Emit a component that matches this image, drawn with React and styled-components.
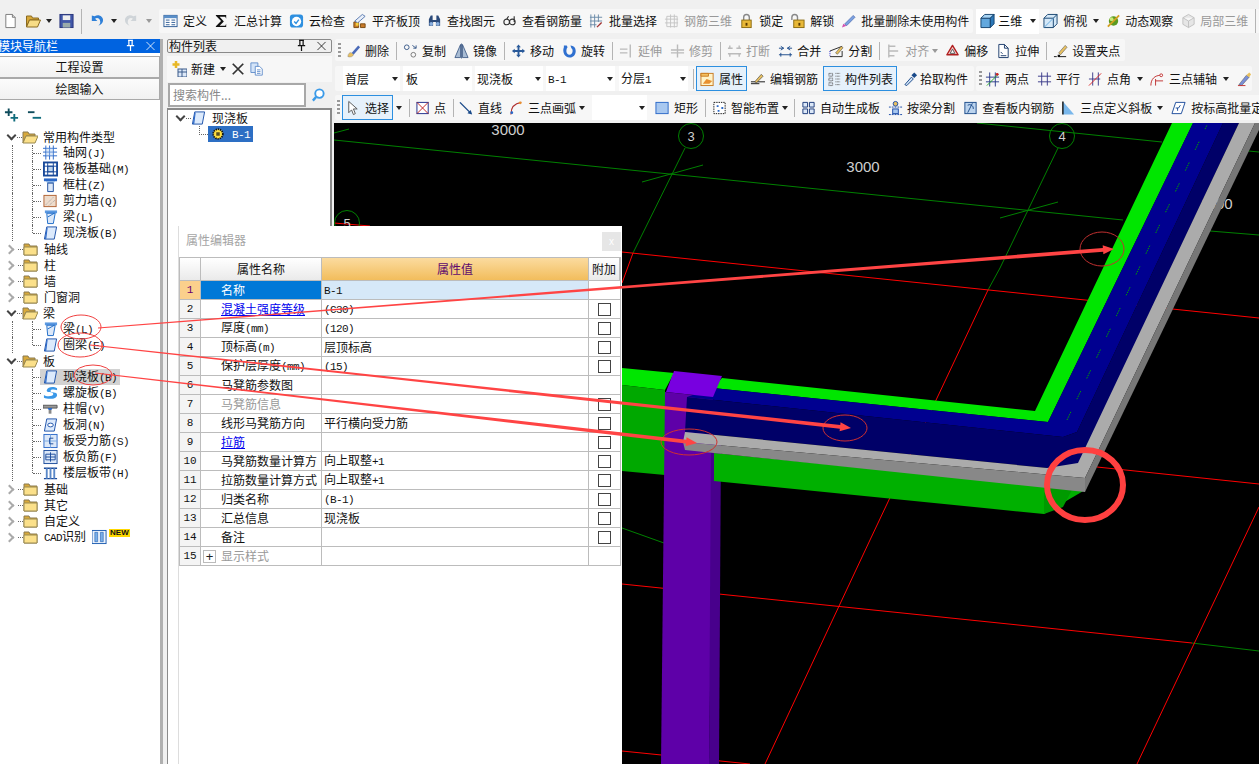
import React from 'react';
import styled, { createGlobalStyle } from 'styled-components';

const GlobalStyle = createGlobalStyle`
  html, body {
    margin: 0;
    padding: 0;
    background: #f0f0f0;
    overflow: hidden;
  }
  * { box-sizing: border-box; }
`;

const Page = styled.div`
  position: relative;
  width: 1259px;
  height: 764px;
  overflow: hidden;
  display: flex;
  flex-direction: column;
  background: #f0f0f0;
  color: #111;
  font: 12px/1 "Noto Sans CJK SC", sans-serif;
  white-space: nowrap;
`;

/* toolbars */
const TopBar = styled.div`
  height: 39px;
  padding: 9px 0 6px 3px;
  display: flex;
  align-items: center;
  gap: 7px;
`;

const Row = styled.div`
  display: flex;
  height: ${p => p.$h}px;
  margin-top: ${p => p.$mt || 0}px;
  margin-left: 1px;
  gap: ${p => p.$between || 0}px;
  flex-shrink: 0;
`;

const Group = styled.div`
  display: flex;
  align-items: center;
  background: #f7f7f7;
  border-radius: 2px;
  gap: ${p => p.$gap ?? 8}px;
  padding: ${p => p.$pt || 0}px ${p => p.$pr || 0}px 0 ${p => p.$pl || 0}px;
  height: 100%;
  margin-left: ${p => p.$ml || 0}px;
  flex: ${p => (p.$grow ? 1 : '0 0 auto')};
`;

const ToolWrap = styled.div`
  display: flex;
  align-items: center;
  flex-shrink: 0;
  gap: ${p => p.$gap ?? 4}px;
  margin-left: ${p => p.$ml || 0}px;
  color: ${p => (p.$muted ? '#999' : '#111')};
`;

const Sep = styled.div`
  width: 1px;
  height: ${p => p.$h || 18}px;
  background: #b4b4b4;
  flex-shrink: 0;
  margin: ${p => p.$m || '0 -2px 0 -1px'};
`;

const Caret = styled.div`
  width: 0;
  height: 0;
  flex-shrink: 0;
  box-sizing: content-box;
  border-left: 3.5px solid transparent;
  border-right: 3.5px solid transparent;
  border-top: 4px solid ${p => (p.$muted ? '#999' : '#222')};
  margin-left: ${p => p.$ml || 0}px;
  margin-right: ${p => p.$mr || 0}px;
`;

const Grip = styled.div`
  width: 3px;
  height: 16px;
  flex-shrink: 0;
  margin-right: ${p => p.$mr || 0}px;
  background: repeating-linear-gradient(to bottom, #999 0 2px, transparent 2px 4px);
`;

const Select = styled.div`
  width: ${p => p.$w}px;
  height: 25px;
  flex-shrink: 0;
  display: flex;
  align-items: center;
  justify-content: space-between;
  padding: 0 2px 0 ${p => p.$pl ?? 2}px;
  background: #fff;
  margin-left: ${p => p.$ml || 0}px;
`;

const DropBox = styled(Select)`
  gap: 3px;
  justify-content: flex-start;
`;

const ToggleButton = styled.div`
  height: 25px;
  flex-shrink: 0;
  display: flex;
  align-items: center;
  gap: ${p => p.$gap ?? 4}px;
  padding: 0 3px 0 ${p => p.$pl ?? 3}px;
  background: #e6f1fb;
  border: 1px solid #2c8fe0;
  margin-left: ${p => p.$ml || 0}px;
`;

const Ico = styled.svg`
  width: ${p => p.$w || 15}px;
  height: 16px;
  flex-shrink: 0;
  display: block;
`;

const Asc = styled.span`
  font-family: "Liberation Mono", monospace;
  font-size: 11px;
  letter-spacing: -0.6px;
`;

const mix = s => s.split(/([\x20-\x7e]+)/).map((part, i) => (i % 2 ? <Asc key={i}>{part}</Asc> : part));

/* main area */
const Main = styled.div`
  flex: 1;
  min-height: 0;
  display: flex;
`;

const NavPanel = styled.div`
  width: 163px;
  flex-shrink: 0;
  display: flex;
  flex-direction: column;
  background: #fff;
  border-right: 3px solid #b0b0b0;
`;

const PanelHead = styled.div`
  height: 14px;
  flex-shrink: 0;
  display: flex;
  align-items: center;
  justify-content: space-between;
  padding: 0 3px 0 ${p => p.$pl || 0}px;
  background: ${p => (p.$active ? '#0063e0' : '#f0f0f0')};
  color: ${p => (p.$active ? '#fff' : '#111')};
  ${p => !p.$active && 'border: 1px solid #8a8a8a; border-radius: 2px;'}
`;

const NavTitle = styled.span`
  margin-left: -2px;
`;

const HeadBtns = styled.div`
  display: flex;
  align-items: center;
  gap: 7px;
`;

const NavTab = styled.div`
  height: 22px;
  display: flex;
  align-items: center;
  justify-content: center;
  background: linear-gradient(#fbfbfb, #f1f1f1);
  border: 1px solid #a9a9a9;
  border-left: 0;
  margin-top: ${p => p.$mt || 0}px;
`;

const NavTools = styled.div`
  height: 29px;
  flex-shrink: 0;
  display: flex;
  align-items: center;
  gap: 8px;
  padding: 1px 0 0 4px;
`;

const TreeWrap = styled.div`
  flex: 1;
  min-height: 0;
`;

const FolderRow = styled.div`
  height: 16px;
  display: flex;
  align-items: center;
  padding-left: 8px;
`;

const Chevron = styled.div`
  width: 7px;
  height: 7px;
  flex-shrink: 0;
  border-right: 2px solid ${p => (p.$open ? '#444' : '#aaa')};
  border-bottom: 2px solid ${p => (p.$open ? '#444' : '#aaa')};
  transform: ${p => (p.$open ? 'translateY(-2px) rotate(45deg)' : 'translateX(-2px) rotate(-45deg)')};
`;

const Dots = styled.div`
  width: ${p => p.$w || 5}px;
  margin-left: ${p => p.$ml ?? 1}px;
  border-top: 1px dotted #666;
  flex-shrink: 0;
`;

const FolderName = styled.span`
  margin-left: ${p => p.$ml ?? 5}px;
`;

const ChildRow = styled.div`
  height: 16px;
  display: flex;
  padding-left: 12px;
`;

const Rail = styled.div`
  width: 1px;
  height: 16px;
  border-left: 1px dotted #666;
  flex-shrink: 0;
`;

const Elbow = styled.div`
  position: relative;
  width: 8px;
  height: ${p => (p.$last ? 8 : 16)}px;
  margin-left: 19px;
  border-left: 1px dotted #666;
  flex-shrink: 0;
  &::after {
    content: '';
    position: absolute;
    left: 0;
    top: 8px;
    width: 8px;
    border-top: 1px dotted #666;
  }
`;

const ChildItem = styled.div`
  display: flex;
  align-items: center;
  gap: 5px;
  padding: 0 3px;
  background: ${p => (p.$selected ? '#d2d2d2' : 'transparent')};
`;

const NewBadge = styled.span`
  font: bold 8px/8px "Liberation Sans", sans-serif;
  color: #111;
  background: #ffd800;
  padding: 0 1px;
  margin: -9px 0 0 2px;
  letter-spacing: 0;
`;

const ListPanel = styled.div`
  width: 165px;
  margin-left: 4px;
  flex-shrink: 0;
  display: flex;
  flex-direction: column;
`;

const ListTools = styled.div`
  height: 26px;
  margin-top: 3px;
  flex-shrink: 0;
  display: flex;
  align-items: center;
  padding-left: 4px;
  gap: 5px;
  background: #f7f7f7;
`;

const SearchRow = styled.div`
  height: 24px;
  margin-top: 1px;
  flex-shrink: 0;
  display: flex;
  align-items: center;
  padding-left: 1px;
  gap: 5px;
`;

const SearchInput = styled.div`
  width: 138px;
  height: 24px;
  display: flex;
  align-items: center;
  padding-left: 3px;
  color: #888;
  background: #fff;
  border: 2px solid #a8a8a8;
`;

const ListTree = styled.div`
  flex: 1;
  min-height: 0;
  margin-top: 1px;
  background: #fff;
  border: 1px solid #8a8a8a;
  border-width: 2px 2px 0 1px;
`;

const ListRow = styled.div`
  height: 16px;
  display: flex;
  align-items: center;
  padding-left: 9px;
`;

const ListChild = styled.div`
  height: 16px;
  display: flex;
  padding-left: 31px;
`;

const ListElbow = styled.div`
  width: 9px;
  height: 9px;
  border-left: 1px dotted #666;
  border-bottom: 1px dotted #666;
  flex-shrink: 0;
`;

const SelectedItem = styled.div`
  width: 45px;
  height: 16px;
  display: flex;
  align-items: center;
  gap: 7px;
  padding-left: 3px;
  color: #fff;
  background: #2d6fc4;
`;

const Work = styled.div`
  flex: 1;
  min-width: 0;
  margin-left: 2px;
  display: flex;
  flex-direction: column;
`;

const Canvas = styled.div`
  flex: 1;
  min-height: 0;
  margin-top: 3px;
  background: #000;
  overflow: hidden;
  svg {
    display: block;
    width: 100%;
    height: 100%;
  }
`;

/* floating property editor */
const EditorWindow = styled.div`
  position: absolute;
  left: 178px;
  top: 226px;
  width: 444px;
  height: 538px;
  background: #fff;
  border-left: 1px solid #ddd;
  display: flex;
  flex-direction: column;
`;

const EditorTitle = styled.div`
  height: 31px;
  flex-shrink: 0;
  display: flex;
  align-items: center;
  justify-content: space-between;
  padding: 0 1px 0 7px;
  color: #a5a5a5;
`;

const TitleText = styled.span`
  margin-top: -3px;
`;

const CloseBox = styled.div`
  width: 19px;
  height: 19px;
  display: flex;
  align-items: center;
  justify-content: center;
  background: #e6e6e6;
  color: #fff;
  font: 10px "Liberation Sans", sans-serif;
`;

const PropGrid = styled.div`
  display: grid;
  grid-template-columns: 21px 121px 267px 31px;
  grid-template-rows: 23px;
  grid-auto-rows: 19px;
  width: 442px;
  border: 1px solid #bcbcbc;
  border-width: 1px 2px 0 1px;
`;

const HeadCell = styled.div`
  display: flex;
  align-items: center;
  justify-content: center;
  background: ${p => (p.$accent ? 'linear-gradient(#fbdb9f, #f2bd5c)' : 'linear-gradient(#fff, #eaeaea)')};
  color: ${p => (p.$accent ? '#5e0a6e' : '#111')};
  border-right: 1px solid #bcbcbc;
  border-bottom: 1px solid #bcbcbc;
`;

const IndexCell = styled.div`
  display: flex;
  align-items: center;
  justify-content: center;
  font: 11px "Liberation Mono", monospace;
  background: ${p => (p.$active ? '#fbd08c' : '#f4f4f4')};
  color: ${p => (p.$active ? '#6a0070' : '#111')};
  border-right: 1px solid #bcbcbc;
  border-bottom: 1px solid #bcbcbc;
`;

const NameCell = styled.div`
  display: flex;
  align-items: center;
  padding-left: ${p => (p.$plus ? 2 : 20)}px;
  gap: 5px;
  overflow: hidden;
  background: ${p => (p.$active ? '#0078d7' : '#fff')};
  color: ${p => (p.$active ? '#fff' : p.$tone === 'link' ? '#0000ee' : p.$tone === 'muted' ? '#999' : '#111')};
  text-decoration: ${p => (p.$tone === 'link' ? 'underline' : 'none')};
  border-right: 1px solid #bcbcbc;
  border-bottom: 1px solid #bcbcbc;
`;

const ValueCell = styled.div`
  display: flex;
  align-items: center;
  padding-left: 2px;
  overflow: hidden;
  background: ${p => (p.$active ? '#d6e8f8' : '#fff')};
  border-right: 1px solid #bcbcbc;
  border-bottom: 1px solid #bcbcbc;
`;

const AddCell = styled.div`
  display: flex;
  align-items: center;
  justify-content: center;
  background: #fff;
  border-bottom: 1px solid #bcbcbc;
`;

const CheckBox = styled.div`
  width: 13px;
  height: 13px;
  border: 1px solid #444;
  background: #fff;
`;

const PlusBox = styled.div`
  width: 13px;
  height: 13px;
  border: 1px solid #bbb;
  display: flex;
  align-items: center;
  justify-content: center;
  color: #222;
  font: 13px/1 "Liberation Sans", sans-serif;
  flex-shrink: 0;
`;

const Overlay = styled.svg`
  position: absolute;
  left: 0;
  top: 0;
  width: 1259px;
  height: 764px;
  pointer-events: none;
`;

/* icons, 16x16 */
const slabIcon = (
  <>
    <path d="M4 1.5h10.5L12 14.5H1.5z" fill="#dceafc" stroke="#1a4fa8" />
    <path d="M2 14.5L4 2l1 .5L3.5 14z" fill="#2a68c8" />
  </>
);
const icons = {
  doc: <><path d="M3 1h7l3 3v11H3z" fill="#fff" stroke="#777" /><path d="M10 1v3h3" fill="#ddd" stroke="#777" /></>,
  open: <><path d="M1 14V3h5l1 2h6v2H4z" fill="#d8a93a" stroke="#8a6a20" /><path d="M1 14l3-7h11l-3 7z" fill="#f7dc86" stroke="#8a6a20" /></>,
  save: <><rect x="1" y="1" width="14" height="14" fill="#4057a8" stroke="#26337a" /><rect x="4" y="2" width="8" height="5" fill="#eee" /><rect x="4" y="10" width="8" height="5" fill="#9aa" /></>,
  undo: <path d="M3 2v6h6L6.5 5.5C9 4 12 5.500 12 9c0 2-1 3-2 4 3-1 5-3 5-6 0-4-5-7-9-4z" fill="#2f80d8" />,
  redo: <path d="M13 2v6H7l2.500-2.500C7 4 4 5.500 4 9c0 2 1 3 2 4-3-1-5-3-5-6 0-4 5-7 9-4z" fill="#cfd4d8" />,
  define: <><rect x="1" y="2" width="14" height="12" fill="#fff" stroke="#2b5a94" /><path d="M1 2h14v3H1z" fill="#5a8fc8" /><path d="M3 7h4M3 9.500h4M3 12h4M9 7h4M9 9.500h4M9 12h4" stroke="#2b5a94" /></>,
  sigma: <path d="M2 1.500h11v4l-1-2H6l4.500 5L6 13h6l1-2v3.500H2v-1l5.500-5.500L2 2.500z" fill="#111" />,
  cloud: <><rect x="1" y="1" width="14" height="14" rx="3" fill="#2f90e0" /><circle cx="8" cy="8.500" r="5" fill="#fff" /><path d="M5.500 8.500l2 2 3-4" fill="none" stroke="#2f90e0" strokeWidth="1.500" /></>,
  level: <><path d="M2 15V9h5v6zM9 15v-4h5v4z" fill="#c87a2a" stroke="#7a4a10" /><path d="M3 8l8-7 3 2-8 7z" fill="#e8eef8" stroke="#5a7ab0" /><rect x="4" y="10" width="3" height="3" fill="#f4d040" /></>,
  find: <><path d="M2 6l2-4h2v5h4V2h2l2 4v7H9.500V9h-3v4H2z" fill="#2b4a7a" /><circle cx="4.500" cy="11" r="2" fill="#8ab0e0" /><circle cx="11.500" cy="11" r="2" fill="#8ab0e0" /></>,
  rebar: <path d="M2 9a3 3 0 1 0 6 0 3 3 0 1 0-6 0M5 6l2-3M14 9a3 3 0 1 1-6 0 3 3 0 1 1 6 0M13 3v6" fill="none" stroke="#333" strokeWidth="1.200" />,
  batch: <><path d="M2 1v14M6 1v14M10 1v8M1 4h13M1 8h13M1 12h7" stroke="#6a8aa8" /><path d="M9 15l5-5-1-1-5 5z" fill="#a03030" /></>,
  rebar3d: <path d="M3 3h11v11H3zM7 1v14M11 1v14M1 6h14M1 10h14" fill="none" stroke="#c4c4c4" />,
  lock: <><path d="M5 7V4a3 3 0 0 1 6 0v3" fill="none" stroke="#888" strokeWidth="1.500" /><rect x="3" y="7" width="10" height="8" fill="#e8b838" stroke="#8a6a10" /><rect x="7" y="10" width="2" height="3" fill="#5a3a00" /></>,
  unlock: <><path d="M2 7V4a3 3 0 0 1 6 0v3" fill="none" stroke="#888" strokeWidth="1.500" /><rect x="4" y="7" width="11" height="8" fill="#e8b838" stroke="#8a6a10" /><rect x="9" y="10" width="2" height="3" fill="#5a3a00" /></>,
  purge: <><path d="M4 11L13 2l2 2-9 9z" fill="#7aa0e0" stroke="#3a5aa0" strokeWidth=".6" /><path d="M1 15l1.500-4L6 13z" fill="#d050b0" /></>,
  cube: <><path d="M1 5h10v10H1z" fill="#62a8de" stroke="#14426e" /><path d="M1 5l4-4h10l-4 4z" fill="#a8d4f4" stroke="#14426e" /><path d="M11 5l4-4v10l-4 4z" fill="#2c78b8" stroke="#14426e" /></>,
  cubeTop: <><path d="M1 5l4-4h10v10l-4 4H1z" fill="#d4e8f8" stroke="#14426e" /><path d="M1 5h10v10M11 5l4-4" fill="none" stroke="#14426e" /><path d="M1 15l10-10" stroke="#62a8de" /></>,
  orbit: <><circle cx="8" cy="8" r="5" fill="#5a9a20" /><path d="M2 14L14 2" stroke="#d4a020" strokeWidth="2" /><circle cx="6" cy="6" r="2" fill="#c8e878" /></>,
  local3d: <path d="M8 1l6 3.500v7L8 15l-6-3.500v-7zM2 4.500L8 8l6-3.500M8 8v7" fill="#e6e6e6" stroke="#c0c0c0" />,
  erase: <><path d="M6 10l7-8 2 2-7 8z" fill="#4a6ab8" /><path d="M2 14c0-3 2-5 4-4l2 2c-1 2-3 3-6 2z" fill="#e8c060" stroke="#888" strokeWidth=".5" /></>,
  copy: <><circle cx="4" cy="4" r="2.500" fill="none" stroke="#3a5a8a" /><circle cx="11" cy="12" r="2.500" fill="none" stroke="#777" /><path d="M10 2l4 3M14 2v3h-3" fill="none" stroke="#3a5a8a" /></>,
  mirror: <path d="M7 1v14H1zM9 1v14h6zM8 0v16" fill="#a8bcd4" stroke="#2a4a7a" strokeWidth=".8" />,
  move: <path d="M8 1l2.500 3H9v3h3V5.500L15 8l-3 2.500V9H9v3h1.500L8 15l-2.500-3H7V9H4v1.500L1 8l3-2.500V7h3V4H5.500z" fill="#2a5a9a" />,
  rotate: <path d="M5 2H2v2c-2 5 1 11 6 11s8-5 6-10c-1-2-3-3-5-3l1 3c2 .5 2 7-2 7-4 0-4-6-2-8z" fill="#2f70d0" />,
  extend: <path d="M1 6h8M1 10h8M12 1v14" stroke="#bbb" strokeWidth="1.500" fill="none" />,
  trim: <path d="M1 7h14M1 10h14M8 1v14" stroke="#bbb" strokeWidth="1.500" fill="none" />,
  split: <path d="M1 5h5M10 5h5M1 11h14M3 2v3M13 2v3M3 11v3M13 11v3" stroke="#bbb" strokeWidth="1.500" fill="none" />,
  merge: <path d="M1 5h5M10 5h5M1 12h14M3 3l3 2-3 2M13 3l-3 2 3 2M3 10v4M13 10v4" stroke="#1a4a8a" fill="none" />,
  divide: <><path d="M1 8l13-5M1 14h13V8" fill="none" stroke="#222" /><path d="M7 10l6-7 2 1.500-6 7z" fill="#e8c060" stroke="#333" strokeWidth=".5" /><path d="M1 8v6" stroke="#22c" strokeDasharray="1 1" /></>,
  align: <path d="M3 1v14M3 3h7M3 8h10M3 13h6" stroke="#bbb" strokeWidth="1.500" fill="none" />,
  offset: <><path d="M8 2l6 10H2z" fill="#f4c4c4" stroke="#b02020" strokeLinejoin="round" strokeWidth="1.500" /><path d="M8 6l2.500 4.500h-5z" fill="#fff" stroke="#555" /></>,
  stretch: <path d="M3 1h6l4 4v10H3zM9 1v4h4M5 9l2 2M5 13h6" fill="#fff" stroke="#1a3a6a" />,
  grips: <><path d="M6 10l7-8 2 2-7 8z" fill="#e8c060" stroke="#555" strokeWidth=".6" /><path d="M1 14h3M7 14h7" stroke="#111" /><rect x="5" y="12" width="2.500" height="2.500" fill="#111" /></>,
  prop: <><rect x="1" y="2" width="13" height="13" fill="#fff3c8" stroke="#c87a20" /><path d="M1 2h8v3H1z" fill="#f4c060" stroke="#c87a20" /><path d="M3 13l4-5 6 2-3 3z" fill="#e89030" /></>,
  editBar: <><path d="M1 11h15M1 13h9" stroke="#111" /><path d="M5 11l7-8 2 2-7 7z" fill="#e8c060" stroke="#333" strokeWidth=".6" /></>,
  listIco: <path d="M2 2h4v3H2zM2 7h4v3H2zM2 12h4v3H2zM9 2h5M9 5h5M9 8h5M9 11h5M9 14h5" fill="#dbe6f2" stroke="#666" strokeDasharray="1 .5" />,
  pick: <><path d="M2 14l7-8 2 2-7 7z" fill="#cfe0f4" stroke="#1a4a8a" /><path d="M9 4l3-3 3 3-3 3z" fill="#1a4a8a" /></>,
  twoPt: <><path d="M5 1v15M11 1v15M1 6h14M1 11h14" stroke="#2a3a8a" /><path d="M2 15L14 3" stroke="#22aa22" /><circle cx="13" cy="3" r="1.500" fill="#c22" /></>,
  parallel: <path d="M5 1v14M11 1v14M1 5h14M1 11h14" stroke="#3a3a8a" fill="none" />,
  angle: <><path d="M5 1v14M11 1v14M1 8h12" stroke="#3a3a8a" /><path d="M1 15L14 2" stroke="#dd2222" /></>,
  arcAxis: <><path d="M2 15c0-7 4-11 11-11M7 15V8M7 10h8" fill="none" stroke="#c03030" /><circle cx="13" cy="4" r="1.500" fill="#fff" stroke="#c03030" /></>,
  brush: <><path d="M2 14l8-10 3 2-8 9z" fill="#7a90d8" stroke="#444" strokeWidth=".5" /><path d="M10 4l3-3 2 2-2 3z" fill="#e8c060" /><path d="M1 15h8" stroke="#c03030" /></>,
  cursor: <path d="M4 1v12l3-3 2 5 2-1-2-5h4z" fill="#fff" stroke="#555" />,
  point: <><rect x="1" y="2" width="12" height="12" fill="#fff" stroke="#1a2a8a" /><path d="M1 2l12 12M13 2L1 14" stroke="#c02020" /></>,
  line: <><path d="M1 2l12 12" stroke="#1a4a8a" strokeWidth="1.500" /><path d="M14 15l-5-1.500 3.500-3.500z" fill="#1a4a8a" /></>,
  arc: <><path d="M2 15C2 8 6 3 13 2" fill="none" stroke="#b03030" strokeWidth="1.200" /><circle cx="3" cy="13" r="1.500" fill="#2a68c8" /><circle cx="12" cy="2.500" r="1.500" fill="#e89030" /></>,
  rect: <rect x="1" y="2" width="13" height="12" fill="#a8c8f0" stroke="#2a68c8" />,
  smart: <><rect x="2" y="2" width="12" height="12" fill="#fff" stroke="#111" strokeDasharray="1.500 1" /><path d="M5 5h2v2H5zM10 7h2v2h-2zM6 10h2v2H6z" fill="#2a68c8" /></>,
  autoSlab: <path d="M2 2h5v5H2zM9 2h5v5H9zM2 9h5v5H2zM9 9h5v5H9z" fill="#dce8f8" stroke="#1a3a7a" />,
  beamCut: <><path d="M1 7h14M1 15h14" stroke="#1a4aa8" strokeDasharray="2 1" /><rect x="5" y="9" width="6" height="5" fill="#a8c8f0" stroke="#1a4aa8" /><circle cx="8" cy="3.500" r="2.500" fill="#e8c060" stroke="#1a4aa8" /></>,
  viewBar: <><rect x="2" y="2" width="12" height="12" fill="#bcd4ee" stroke="#1a4a8a" /><path d="M5 13L10 3M5 5a4 4 0 0 1 6 4" fill="none" stroke="#1a4a8a" /></>,
  slope: <><path d="M2 1v14h12z" fill="#7ab8ec" /><path d="M2 1v14" stroke="#111" strokeWidth="1.500" /></>,
  levelSet: <path d="M5 2h10l-4 12H1zM5 8h3l2-3M7 8v3" fill="#fff" stroke="#1a4a9a" />,
  grid: <><path d="M3 0v15M7 0v15M11 0v15M0 3h15M0 7h15M0 11h15" stroke="#2a68c8" /><path d="M3 3h8v8H3z" fill="#a8c8f0" opacity=".4" /></>,
  raft: <><rect x="1" y="1" width="14" height="14" fill="#fff" stroke="#1a4a9a" strokeWidth="2" /><rect x="5" y="5" width="6" height="6" fill="#bcd4ee" stroke="#1a4a9a" /><path d="M1 5h14M1 11h14M5 1v14M11 1v14" stroke="#1a4a9a" /></>,
  column: <><path d="M1 1h14v3H1z" fill="#2a68c8" /><path d="M3 4h10l-2 2H5z" fill="#7aa8e0" /><path d="M5 6h6v9H5z" fill="#dce8f8" stroke="#1a4a9a" /></>,
  wall: <><rect x="1" y="2" width="13" height="12" fill="#eedccc" stroke="#b06030" /><path d="M3 12l8-8M6 13l7-6" stroke="#999" strokeDasharray="1 1" /></>,
  beam: <><path d="M2 1h13v3H2z" fill="#5a98e0" /><path d="M4 4h9l-2 11H5z" fill="#dce8f8" stroke="#1a6ac8" /><path d="M5 8l7-4" stroke="#1a6ac8" /></>,
  slab: slabIcon,
  spiral: <path d="M15 3c-3-2-10-2-11 2-1 3 7 1 7 4s-8 3-10 1v3c4 2 14 2 14-3 0-4-7-2-7-4s4-2 7-1z" fill="#3a98e8" />,
  cap: <><path d="M0 4h15v3H0z" fill="#999" stroke="#555" /><path d="M5 7h5l-1 2H6z" fill="#2a68c8" /><path d="M6 9h3v4H6z" fill="#888" /></>,
  hole: <><path d="M4 1.500h10.500L12 14.500H1.500z" fill="#dceafc" stroke="#1a4fa8" /><ellipse cx="8" cy="8" rx="3" ry="2" fill="#fff" stroke="#1a4fa8" /></>,
  rebarA: <><rect x="1" y="1" width="14" height="14" fill="#dce8f8" stroke="#2a68c8" /><path d="M1 8h14M8 1v14" stroke="#7aa8e0" /><path d="M11 5H7v6h4" fill="none" stroke="#1a4a9a" /></>,
  rebarB: <><rect x="1" y="1" width="14" height="14" fill="#dce8f8" stroke="#1a4a9a" /><path d="M3 8h10M3 5h10v6H3zM8 3v10" fill="none" stroke="#1a4a9a" /></>,
  strip: <><path d="M1 3h14M1 14h14" stroke="#1a4a9a" strokeWidth="1.500" /><path d="M4 3v11M8 3v11M12 3v11" stroke="#5a88c8" strokeWidth="2" /></>,
  folder: <><path d="M1 14V3h5l1 2h7v9z" fill="#d8a93a" stroke="#8a7a50" /><path d="M1 14V6h13v8z" fill="#fbe08a" stroke="#9a8a50" /></>,
  folderOpen: <><path d="M1 14V3h5l1 2h6v2H4z" fill="#d8a93a" stroke="#8a7a50" /><path d="M1 14l3-7h12l-3 7z" fill="#fbe08a" stroke="#9a8a50" /></>,
  cadPanel: <><rect x="0" y="1" width="15" height="14" fill="#eaf2fb" stroke="#1a5ab0" /><path d="M3 3h3v10H3zM9 3h3v10H9z" fill="#7ab0e8" stroke="#1a5ab0" strokeWidth=".6" /></>,
  plusAll: <><path d="M5 1v8M1 5h8" stroke="#0f4c5c" strokeWidth="2" /><path d="M11 7v8M7 11h8" stroke="#0f6c7c" strokeWidth="2" /></>,
  minusAll: <><path d="M1 5h7" stroke="#0f4c5c" strokeWidth="2" /><path d="M6 11h9" stroke="#0f6c7c" strokeWidth="2" /></>,
  newItem: <><path d="M5 0v7M1.500 3.500h7" stroke="#e8b828" strokeWidth="2.500" /><rect x="7" y="8" width="9" height="8" fill="#dce8f8" stroke="#3a5a8a" /><path d="M7 11h9M11 8v8" stroke="#3a5a8a" /></>,
  cross: <path d="M2 2l12 12M14 2L2 14" stroke="#333" strokeWidth="2" />,
  paste: <><path d="M1 1h8v11H1z" fill="#d4e4f8" stroke="#5a88c8" /><path d="M6 5h5l3 3v7H6z" fill="#fff" stroke="#5a88c8" /><path d="M8 9h4M8 11h4M8 13h4" stroke="#5a88c8" /></>,
  search: <><circle cx="9" cy="6.500" r="4.500" fill="#fff" stroke="#3a9ae8" strokeWidth="2" /><path d="M5.500 10L2 14" stroke="#3a9ae8" strokeWidth="2.500" /></>,
  gear: <><circle cx="8" cy="8" r="5.500" fill="#ffe040" stroke="#111" strokeDasharray="1.500 1" strokeWidth="2" /><path d="M6 6h4v4H6z" fill="#111" opacity=".7" /></>,
  pin: <path d="M5 1h6M6 1v6M10 1v6M3.500 7.500h9M8 8v6" fill="none" strokeWidth="1.500" stroke="currentColor" />,
  close: <path d="M3 3l10 10M13 3L3 13" stroke="currentColor" fill="none" />,
};

const Icon = ({ name, w }) => (
  <Ico viewBox="0 0 16 16" $w={w}>{icons[name]}</Ico>
);

const Tool = ({ icon, label, gap, ml, muted, w }) => (
  <ToolWrap $gap={gap} $ml={ml} $muted={muted}>
    <Icon name={icon} w={w} />
    <span>{label}</span>
  </ToolWrap>
);

const treeData = [
  { name: '常用构件类型', kids: [['轴网(J)', 'grid'], ['筏板基础(M)', 'raft'], ['框柱(Z)', 'column'], ['剪力墙(Q)', 'wall'], ['梁(L)', 'beam'], ['现浇板(B)', 'slab']] },
  { name: '轴线' },
  { name: '柱' },
  { name: '墙' },
  { name: '门窗洞' },
  { name: '梁', kids: [['梁(L)', 'beam'], ['圈梁(E)', 'slab']] },
  { name: '板', kids: [['现浇板(B)', 'slab', true], ['螺旋板(B)', 'spiral'], ['柱帽(V)', 'cap'], ['板洞(N)', 'hole'], ['板受力筋(S)', 'rebarA'], ['板负筋(F)', 'rebarB'], ['楼层板带(H)', 'strip']] },
  { name: '基础' },
  { name: '其它' },
  { name: '自定义' },
  { name: 'CAD识别', badge: true },
];

const props = [
  { name: '名称', value: 'B-1', active: true, noCheck: true },
  { name: '混凝土强度等级', value: '(C30)', tone: 'link' },
  { name: '厚度(mm)', value: '(120)' },
  { name: '顶标高(m)', value: '层顶标高' },
  { name: '保护层厚度(mm)', value: '(15)' },
  { name: '马凳筋参数图', noCheck: true },
  { name: '马凳筋信息', tone: 'muted' },
  { name: '线形马凳筋方向', value: '平行横向受力筋' },
  { name: '拉筋', tone: 'link' },
  { name: '马凳筋数量计算方', value: '向上取整+1' },
  { name: '拉筋数量计算方式', value: '向上取整+1' },
  { name: '归类名称', value: '(B-1)' },
  { name: '汇总信息', value: '现浇板' },
  { name: '备注' },
  { name: '显示样式', tone: 'muted', noCheck: true, plus: true },
];

const Tree = () => treeData.map(node => (
  <React.Fragment key={node.name}>
    <FolderRow>
      <Chevron $open={!!node.kids} />
      <Dots $ml={node.kids ? 2 : 3} />
      <Icon name={node.kids ? 'folderOpen' : 'folder'} w={16} />
      <FolderName>{mix(node.name)}</FolderName>
      {node.badge && (
        <>
          <FolderName $ml={6}><Icon name="cadPanel" /></FolderName>
          <NewBadge>NEW</NewBadge>
        </>
      )}
    </FolderRow>
    {node.kids && node.kids.map(([label, icon, selected], i) => (
      <ChildRow key={label}>
        <Rail />
        <Elbow $last={i === node.kids.length - 1} />
        <ChildItem $selected={selected}>
          <Icon name={icon} />
          <span>{mix(label)}</span>
        </ChildItem>
      </ChildRow>
    ))}
  </React.Fragment>
));

const RED = '#ff0000';
const GREEN = '#008000';

const gridLines = [
  [334, 140, 1123, 220, GREEN], [977, 123, 1162, 142, GREEN], [1210, 231, 1259, 235, GREEN], [1238, 150, 1259, 152, GREEN],
  [334, 133, 349, 129, GREEN], [685, 148, 633, 253, GREEN], [633, 253, 622, 283, RED], [642, 182, 703, 165, GREEN],
  [1058, 148, 1000, 268, GREEN], [1000, 268, 988, 290, GREEN], [988, 290, 870, 540, RED], [870, 540, 765, 764, RED],
  [1000, 218, 1058, 202, GREEN], [334, 223, 370, 226, RED], [622, 252, 1259, 318, RED], [622, 584, 1192, 643, RED],
  [1192, 643, 1259, 651, GREEN], [622, 751, 750, 764, RED], [1097, 467, 1259, 484, RED], [1259, 507, 1137, 764, RED],
  [622, 528, 664, 543, GREEN],
];

const solids = [
  ['622,368 674,373 665,390 622,385', '#00e600'],
  ['622,385 665,390 665,475 622,471', '#00a800'],
  ['665,392 713,397 712,540 709,764 661,764', '#5e00a8'],
  ['711,440 721,440 719,764 709,764', '#48008c'],
  ['714,453 1085,490 1044,514 714,481', '#00b000'],
  ['1044,480 1073,488 1063,507 1044,514', '#009a00'],
  ['722,378 1035,411 1172,123 1193,123 1048,422 713,388', '#00e600'],
  ['713,388 1048,422 1193,123 1223,123 1077,432 1063,437 687,397', '#000090'],
  ['687,397 1063,437 1077,432 1223,123 1239,123 1078,465 1047,468 685,432', '#000068'],
  ['674,371 722,376 713,397 666,392', '#7800e0'],
  ['685,432 1047,468 1078,463 1239,123 1255,123 1085,478 683,442', '#ababab'],
  ['683,442 1085,478 1085,492 685,450', '#888888'],
  ['1085,478 1255,123 1259,123 1259,130 1085,492', '#777777'],
];

const CanvasView = () => (
  <svg viewBox="334 123 925 641" preserveAspectRatio="none">
    {gridLines.map(([x1, y1, x2, y2, c]) => (
      <line key={`${x1}-${y1}`} x1={x1} y1={y1} x2={x2} y2={y2} stroke={c} />
    ))}
    <circle cx="691" cy="136" r="12.500" fill="none" stroke={GREEN} />
    <circle cx="1062" cy="136" r="12.500" fill="none" stroke={GREEN} />
    <circle cx="347" cy="223" r="12.500" fill="none" stroke={GREEN} />
    <g fill="#cfcfcf" fontFamily="Liberation Sans, sans-serif" fontSize="15" textAnchor="middle">
      <text x="508" y="135">3000</text>
      <text x="863" y="172">3000</text>
      <text x="1216" y="209">3000</text>
      <text x="691" y="141" fontSize="13">3</text>
      <text x="1062" y="141" fontSize="13">4</text>
      <text x="347" y="228" fontSize="13">5</text>
    </g>
    {solids.map(([points, fill]) => <polygon key={points} points={points} fill={fill} />)}
    <line x1="1067" y1="420" x2="1207" y2="125" stroke="#00a000" strokeDasharray="1.500 1 1.500 1 1.500 1 1.500 14" />
  </svg>
);

// tapered red arrow, thin at the tail
const arrowPoints = (x1, y1, x2, y2) => {
  const len = Math.hypot(x2 - x1, y2 - y1);
  const ux = (x2 - x1) / len;
  const uy = (y2 - y1) / len;
  const nx = -uy;
  const ny = ux;
  const bx = x2 - ux * 11;
  const by = y2 - uy * 11;
  const p = (x, y, w) => `${x + nx * w},${y + ny * w}`;
  return [p(x1, y1, 0.5), p(bx, by, 1.9), p(bx, by, 4.5), `${x2},${y2}`, p(bx, by, -4.5), p(bx, by, -1.9), p(x1, y1, -0.5)].join(' ');
};

const thinRings = [
  [81, 327, 20, 12, '#f04040'], [80, 345, 22, 12, '#f04040'], [93, 375, 19, 10, '#f04040'],
  [1102, 249, 22, 17, '#c03030'], [845, 428, 22, 13, '#d03030'], [689, 442, 28, 13, '#d03030'],
];

const Annotations = () => (
  <Overlay viewBox="0 0 1259 764">
    {thinRings.map(([cx, cy, rx, ry, c]) => (
      <ellipse key={cx} cx={cx} cy={cy} rx={rx} ry={ry} fill="none" stroke={c} />
    ))}
    <ellipse cx="1085" cy="485" rx="38" ry="35" fill="none" stroke="#ff4040" strokeWidth="6" />
    <polygon points={arrowPoints(98, 328, 1114, 249)} fill="#ff4444" />
    <polygon points={arrowPoints(90, 345, 851, 428)} fill="#ff4444" />
    <polygon points={arrowPoints(95, 373, 697, 443)} fill="#ff4444" />
  </Overlay>
);

const PropEditor = () => (
  <EditorWindow>
    <EditorTitle>
      <TitleText>属性编辑器</TitleText>
      <CloseBox>x</CloseBox>
    </EditorTitle>
    <PropGrid>
      <HeadCell />
      <HeadCell>属性名称</HeadCell>
      <HeadCell $accent>属性值</HeadCell>
      <HeadCell>附加</HeadCell>
      {props.map((row, i) => (
        <React.Fragment key={row.name}>
          <IndexCell $active={row.active}>{i + 1}</IndexCell>
          <NameCell $active={row.active} $tone={row.tone} $plus={row.plus}>
            {row.plus && <PlusBox>+</PlusBox>}
            <span>{mix(row.name)}</span>
          </NameCell>
          <ValueCell $active={row.active}>{row.value && <span>{mix(row.value)}</span>}</ValueCell>
          <AddCell>{!row.noCheck && <CheckBox />}</AddCell>
        </React.Fragment>
      ))}
    </PropGrid>
  </EditorWindow>
);

const App = () => (
  <Page>
    <GlobalStyle />
    <TopBar>
      <Icon name="doc" />
      <Icon name="open" w={17} />
      <Caret $ml={-3} />
      <Icon name="save" />
      <Sep $h={25} $m="0" />
      <Icon name="undo" />
      <Caret />
      <Icon name="redo" />
      <Caret $muted />
      <Group $gap={7} $pl={4} $pr={4}>
        <Tool icon="define" label="定义" gap={5} />
        <Tool icon="sigma" label="汇总计算" gap={5} />
        <Tool icon="cloud" label="云检查" gap={5} />
        <Tool icon="level" label="平齐板顶" gap={5} />
        <Tool icon="find" label="查找图元" gap={5} />
        <Tool icon="rebar" label="查看钢筋量" gap={5} />
        <Tool icon="batch" label="批量选择" gap={5} />
        <Tool icon="rebar3d" label="钢筋三维" gap={5} muted />
        <Tool icon="lock" label="锁定" gap={5} />
        <Tool icon="unlock" label="解锁" gap={5} />
        <Tool icon="purge" label="批量删除未使用构件" gap={5} />
      </Group>
      <Group $gap={7} $ml={-4} $pr={6}>
        <DropBox $w={63} $pl={4}>
          <Tool icon="cube" label="三维" gap={3} />
          <Caret $ml={5} />
        </DropBox>
        <Tool icon="cubeTop" label="俯视" gap={5} ml={-3} />
        <Caret $ml={-1} />
        <Tool icon="orbit" label="动态观察" />
        <Tool icon="local3d" label="局部三维" ml={1} muted />
        <Sep $h={24} $m="0" />
      </Group>
    </TopBar>
    <Main>
      <NavPanel>
        <PanelHead $active>
          <NavTitle>模块导航栏</NavTitle>
          <HeadBtns><Icon name="pin" w={13} /><Icon name="close" w={13} /></HeadBtns>
        </PanelHead>
        <NavTab $mt={3}>工程设置</NavTab>
        <NavTab>绘图输入</NavTab>
        <NavTools>
          <Icon name="plusAll" />
          <Icon name="minusAll" />
        </NavTools>
        <TreeWrap><Tree /></TreeWrap>
      </NavPanel>

      <ListPanel>
        <PanelHead $pl={1}>
          <span>构件列表</span>
          <HeadBtns><Icon name="pin" w={13} /><Icon name="close" w={13} /></HeadBtns>
        </PanelHead>
        <ListTools>
          <Tool icon="newItem" label="新建" w={16} />
          <Caret />
          <Icon name="cross" w={14} />
          <Icon name="paste" w={14} />
        </ListTools>
        <SearchRow>
          <SearchInput>搜索构件...</SearchInput>
          <Icon name="search" />
        </SearchRow>
        <ListTree>
          <ListRow>
            <Chevron $open />
            <Dots $ml={2} />
            <Icon name="slab" />
            <FolderName $ml={6}>现浇板</FolderName>
          </ListRow>
          <ListChild>
            <ListElbow />
            <SelectedItem>
              <Icon name="gear" w={14} />
              <span>{mix('B-1')}</span>
            </SelectedItem>
          </ListChild>
        </ListTree>
      </ListPanel>

      <Work>
        <Row $h={22}>
          <Group $pl={3} $pr={5} $pt={2}>
            <Grip $mr={-3} />
            <Tool icon="erase" label="删除" />
            <Sep />
            <Tool icon="copy" label="复制" />
            <Tool icon="mirror" label="镜像" />
            <Sep />
            <Tool icon="move" label="移动" />
            <Tool icon="rotate" label="旋转" />
            <Sep />
            <Tool icon="extend" label="延伸" muted />
            <Tool icon="trim" label="修剪" muted />
            <Sep />
            <Tool icon="split" label="打断" muted />
            <Tool icon="merge" label="合并" />
            <Tool icon="divide" label="分割" />
            <Sep />
            <Tool icon="align" label="对齐" muted />
            <Caret $ml={-5} $mr={-1} $muted />
            <Tool icon="offset" label="偏移" />
            <Tool icon="stretch" label="拉伸" />
            <Sep />
            <Tool icon="grips" label="设置夹点" />
          </Group>
        </Row>
        <Row $h={25} $mt={5} $between={2}>
          <Group $gap={3} $pl={8} $pr={6}>
            <Select $w={57}><span>首层</span><Caret /></Select>
            <Select $w={69} $pl={3}><span>板</span><Caret /></Select>
            <Select $w={68}><span>现浇板</span><Caret /></Select>
            <Select $w={69}><span>{mix('B-1')}</span><Caret /></Select>
            <Select $w={69} $ml={1}><span>{mix('分层1')}</span><Caret /></Select>
            <Sep $h={20} $m="0 -1px 0 2px" />
            <ToggleButton><Icon name="prop" /><span>属性</span></ToggleButton>
            <Tool icon="editBar" label="编辑钢筋" gap={5} />
            <ToggleButton $gap={3} $ml={2}><Icon name="listIco" /><span>构件列表</span></ToggleButton>
            <Tool icon="pick" label="拾取构件" gap={2} ml={3} />
          </Group>
          <Group $pl={3}>
            <Grip $mr={-5} />
            <Tool icon="twoPt" label="两点" gap={5} />
            <Tool icon="parallel" label="平行" />
            <Tool icon="angle" label="点角" />
            <Caret $ml={-2} />
            <Tool icon="arcAxis" label="三点辅轴" gap={5} ml={-2} />
            <Caret $ml={-2} />
            <Icon name="brush" />
          </Group>
        </Row>
        <Row $h={25} $mt={4}>
          <Group $pl={2} $grow>
            <Grip $mr={-6} />
            <ToggleButton $pl={2} $gap={5}><Icon name="cursor" /><span>选择</span></ToggleButton>
            <Caret $ml={-5} />
            <Sep />
            <Tool icon="point" label="点" gap={3} />
            <Sep />
            <Tool icon="line" label="直线" ml={-1} />
            <Tool icon="arc" label="三点画弧" ml={-1} />
            <Caret $ml={-5} />
            <Select $w={55} $ml={-1}><span /><Caret /></Select>
            <Tool icon="rect" label="矩形" />
            <Sep />
            <Tool icon="smart" label="智能布置" />
            <Caret $ml={-5} $mr={-1} />
            <Sep />
            <Tool icon="autoSlab" label="自动生成板" />
            <Tool icon="beamCut" label="按梁分割" />
            <Tool icon="viewBar" label="查看板内钢筋" />
            <Tool icon="slope" label="三点定义斜板" ml={-1} />
            <Caret $ml={-3} />
            <Tool icon="levelSet" label="按标高批量定义" gap={5} />
          </Group>
        </Row>
        <Canvas><CanvasView /></Canvas>
      </Work>
    </Main>
    <PropEditor />
    <Annotations />
  </Page>
);

export default App;
